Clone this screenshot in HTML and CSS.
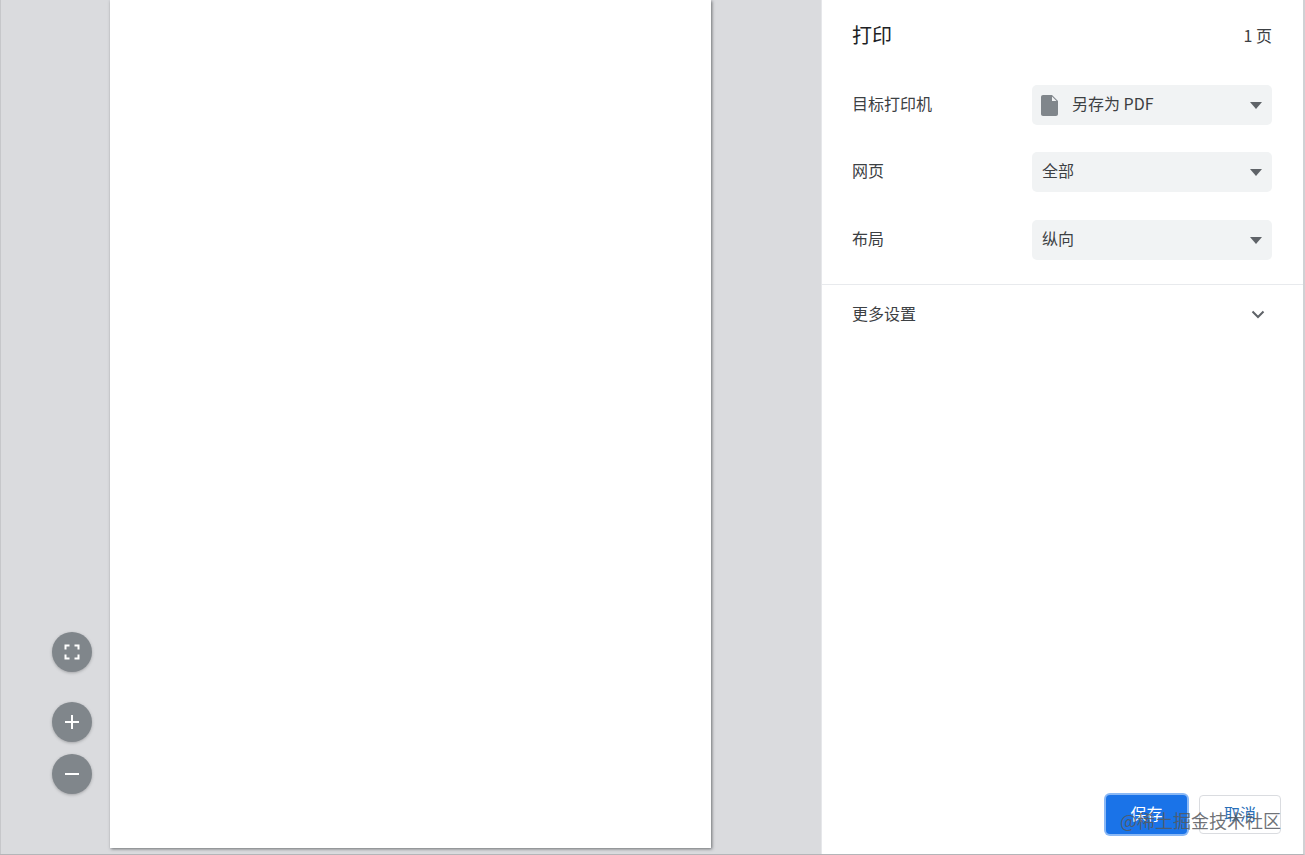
FILE: index.html
```html
<!DOCTYPE html>
<html lang="zh-CN">
  <head>
    <meta charset="UTF-8" />
    <title>打印</title>
    <link rel="stylesheet" href="styles.css">
  </head>
  <body>
    <div class="app">
      <div class="preview">
        <div class="sheet"></div>
        <div class="zoom-btns">
          <button class="round fit-btn" title="fit">
            <svg width="16" height="16" viewBox="0 0 16 16" fill="none" stroke="#fff" stroke-width="2">
              <path d="M1.5 5.5V1.5H5.5M10.5 1.5H14.5V5.5M14.5 10.5V14.5H10.5M5.5 14.5H1.5V10.5" />
            </svg>
          </button>
          <button class="round" title="plus">
            <svg width="16" height="16" viewBox="0 0 16 16" fill="none" stroke="#fff" stroke-width="2">
              <path d="M8 1V15M1 8H15" />
            </svg>
          </button>
          <button class="round" title="minus">
            <svg width="16" height="16" viewBox="0 0 16 16" fill="none" stroke="#fff" stroke-width="2">
              <path d="M1 8H15" />
            </svg>
          </button>
        </div>
      </div>

      <div class="sidebar">
        <div class="header">
          <h1>打印</h1>
          <span class="pages">1 页</span>
        </div>

        <div class="settings">
          <div class="row">
            <span class="label">目标打印机</span>
            <div class="select">
              <svg class="file-icon" width="17" height="21" viewBox="0 0 17 21">
                <path fill="#80868b" d="M2 0H11L17 6V19C17 20.1 16.1 21 15 21H2C.9 21 0 20.1 0 19V2C0 .9.9 0 2 0Z" />
                <path fill="#f1f3f4" d="M11 1.5L15.5 6H11Z" />
              </svg>
              <span class="value">另存为 PDF</span>
              <i class="caret"></i>
            </div>
          </div>
          <div class="row">
            <span class="label">网页</span>
            <div class="select">
              <span class="value">全部</span>
              <i class="caret"></i>
            </div>
          </div>
          <div class="row">
            <span class="label">布局</span>
            <div class="select">
              <span class="value">纵向</span>
              <i class="caret"></i>
            </div>
          </div>
        </div>

        <div class="more">
          <span class="label">更多设置</span>
          <svg width="14" height="9" viewBox="0 0 14 9" fill="none" stroke="#5f6368" stroke-width="2">
            <path d="M1.5 1.5L7 7L12.5 1.5" />
          </svg>
        </div>

        <div class="actions">
          <button class="btn save">保存</button>
          <button class="btn cancel">取消</button>
        </div>
      </div>
    </div>
    <div class="watermark">@稀土掘金技术社区</div>
  </body>
</html>
```

FILE: styles.css
```css
* {
  box-sizing: border-box;
}

html,
body {
  margin: 0;
  height: 100%;
  overflow: hidden;
}

body {
  position: relative;
  background: #fff;
  font-family: "Noto Sans CJK SC", "Liberation Sans", sans-serif;
  color: #3c4043;
}

.app {
  display: flex;
  width: 1305px;
  height: 855px;
  border-bottom: 1px solid #b4b5b8;
  border-right: 2px solid #d0d1d4;
}

.preview {
  position: relative;
  flex: none;
  width: 822px;
  background: #dadbde;
  border-left: 1px solid #c6c7ca;
  border-right: 1px solid #e6e7ea;
  padding: 0 110px 6px 109px;
}

.sheet {
  height: 100%;
  background: #fff;
  box-shadow: 1px 1px 3px rgba(60, 64, 67, 0.7);
}

.zoom-btns {
  position: absolute;
  left: 51px;
  top: 632px;
  display: flex;
  flex-direction: column;
}

.round {
  display: flex;
  align-items: center;
  justify-content: center;
  width: 40px;
  height: 40px;
  padding: 0;
  border: none;
  border-radius: 50%;
  background: #80868b;
  box-shadow: 0 1px 3px rgba(60, 64, 67, 0.35);
  margin-bottom: 12px;
}

.fit-btn {
  margin-bottom: 30px;
}

.sidebar {
  flex: 1;
  display: flex;
  flex-direction: column;
  min-width: 0;
}

.header {
  display: flex;
  align-items: flex-start;
  justify-content: space-between;
  padding: 20px 31px 0 30px;
  height: 85px;
}

h1 {
  margin: 0;
  font-size: 20px;
  line-height: 29px;
  font-weight: 400;
  color: #202124;
}

.pages {
  font-size: 16px;
  line-height: 31px;
  color: #3c4043;
}

.settings {
  display: flex;
  flex-direction: column;
  gap: 27.4px;
  padding: 0 31px 24.2px 30px;
  border-bottom: 1px solid #e8eaed;
}

.row {
  display: flex;
  align-items: center;
  justify-content: space-between;
}

.label {
  font-size: 16px;
  color: #3c4043;
  padding-bottom: 4px;
}

.select {
  display: flex;
  align-items: center;
  position: relative;
  width: 240px;
  height: 40px;
  padding: 0 10px;
  border-radius: 5px;
  background: #f1f3f4;
  font-size: 16px;
  color: #3c4043;
}

.value {
  padding-bottom: 4px;
}

.file-icon {
  margin: 0 14px 0 -1px;
}

.caret {
  position: absolute;
  right: 10px;
  top: 17px;
  border-top: 7px solid #5f6368;
  border-left: 6.5px solid transparent;
  border-right: 6.5px solid transparent;
}

.more {
  display: flex;
  align-items: center;
  justify-content: space-between;
  padding: 5px 38px 0 30px;
  height: 54px;
  font-size: 16px;
  color: #3c4043;
}

.more .label {
  padding-bottom: 2px;
}

.actions {
  display: flex;
  align-items: flex-start;
  margin-top: auto;
  padding: 0 22px 20px 284px;
}

.btn {
  height: 39px;
  border-radius: 4px;
  font-family: inherit;
  font-size: 16px;
  line-height: 20px;
  padding: 0 0 3px;
}

.save {
  width: 81px;
  margin-right: 12px;
  background: #1a73e8;
  border: none;
  color: #fff;
  box-shadow: 0 0 0 2px #8ab8f5;
}

.cancel {
  width: 82px;
  background: #fff;
  border: 1px solid #dadce0;
  color: #2a6fb8;
}

.watermark {
  position: absolute;
  left: 1120px;
  top: 807px;
  font-size: 18px;
  line-height: 26px;
  color: rgba(85, 89, 94, 0.85);
  white-space: nowrap;
}
```
